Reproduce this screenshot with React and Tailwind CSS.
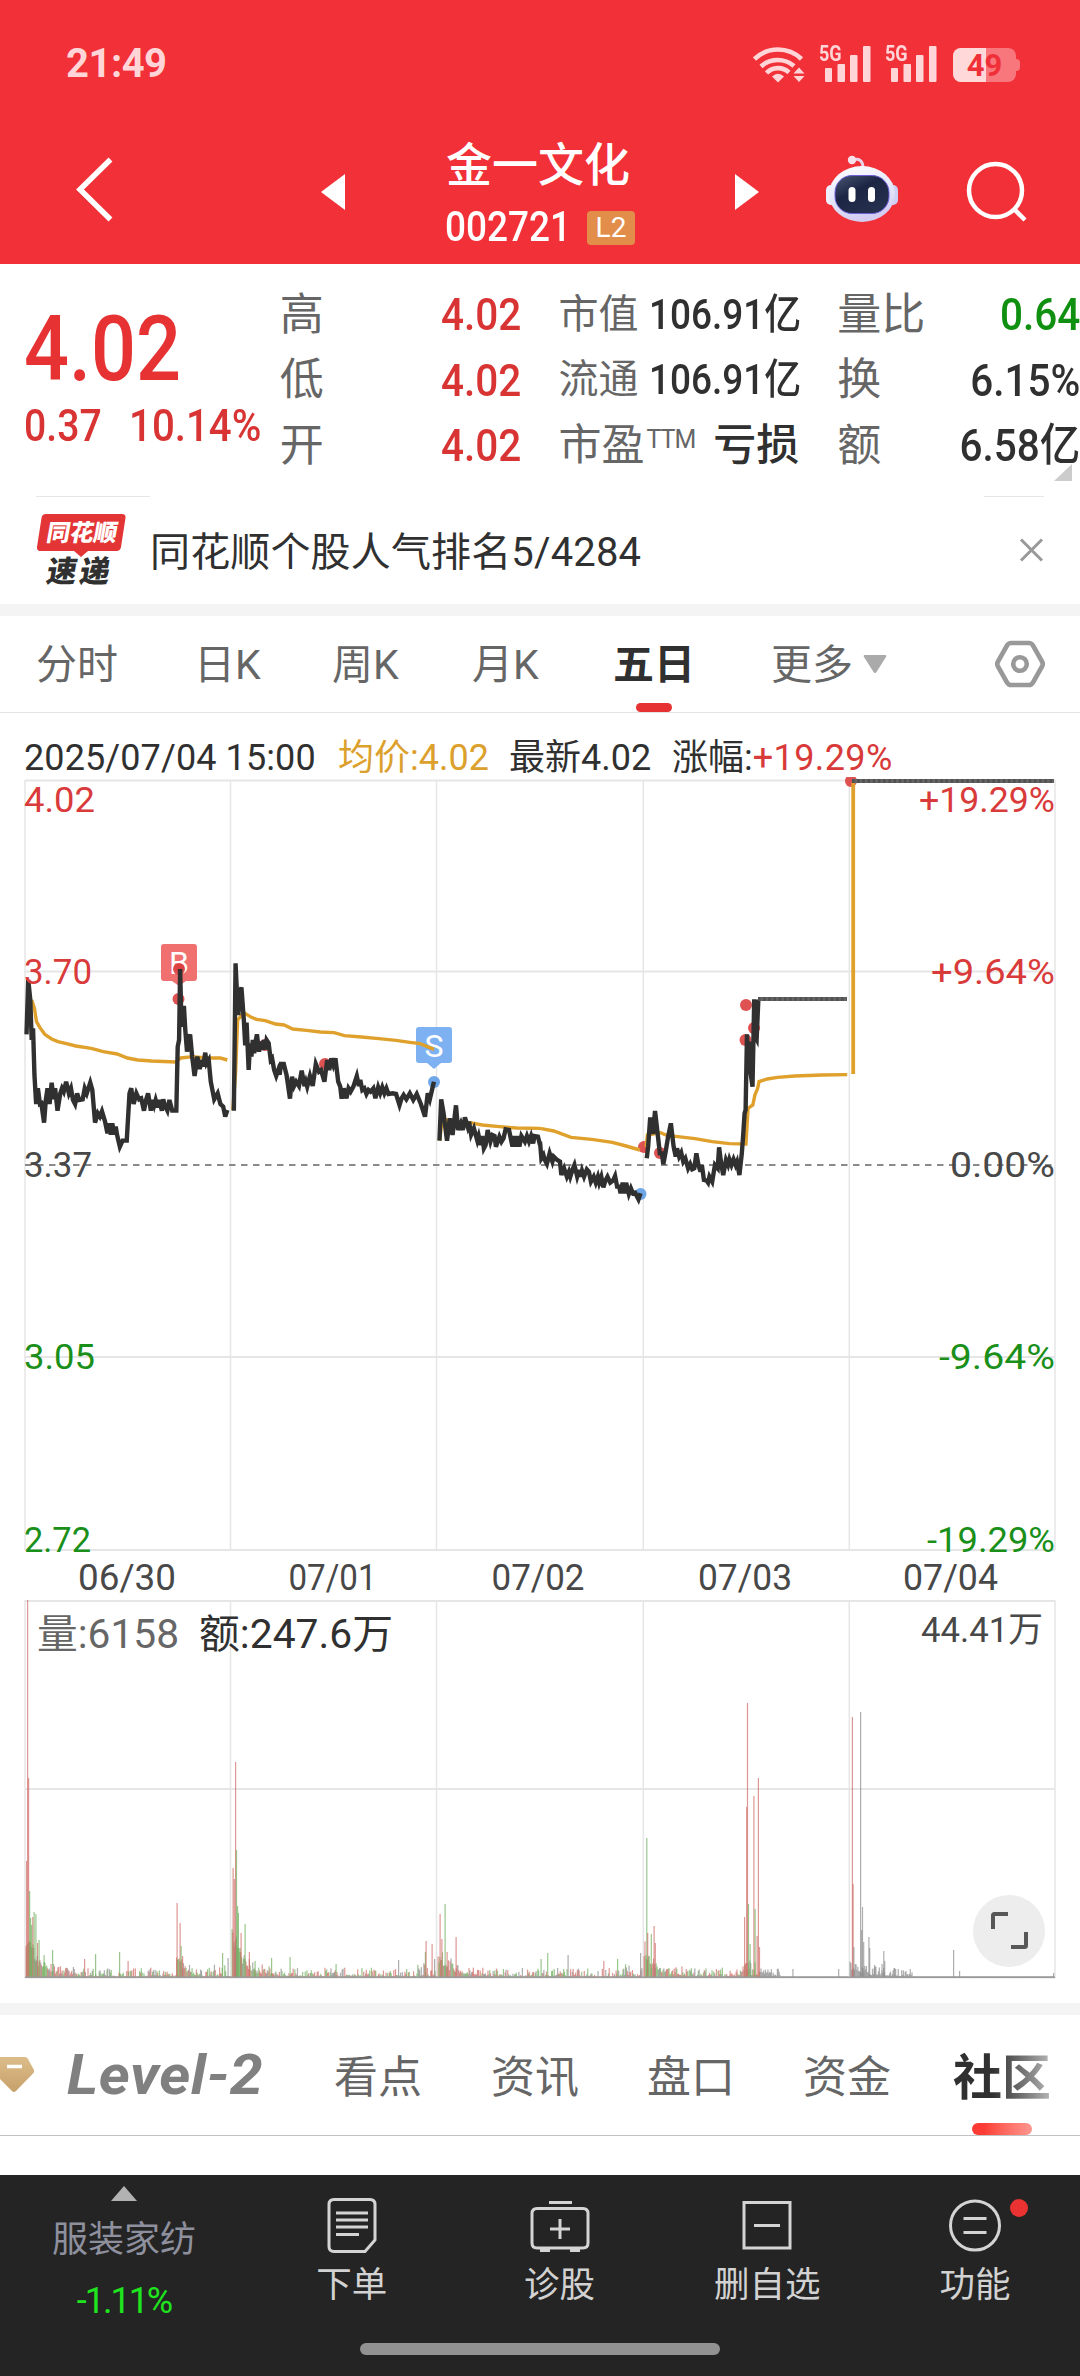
import React from "react";
import clsx from "clsx";

const UP = "#d93a3a";
const DOWN = "#1a8f1a";
const AVG = "#dfa02c";
const INK = "#303030";

// 분할 좌표계: 왼쪽 절반 / 오른쪽 절반
const LEFT_HALF = "translate(0 900) scale(0.3444 0.33333)";
const RIGHT_HALF = "translate(540 760) scale(0.3444 0.33333)";

const leftPrices = [
  "77,403 82,240 88,300 92,420 96,385 100,525 105,612 110,565 116,612 120,610 128,668 133,600 138,565 144,612 150,548 156,598 160,565 167,632 175,580 180,565 185,575 192,545 200,580 206,565 212,600 218,612 224,580 230,600 240,598 246,565 252,580 262,548 268,570 276,668 284,640 290,650 296,634 305,665 312,700 318,670 322,704 326,670 332,704 336,680 340,705 348,740 356,722 368,722 376,580 381,565 388,612 396,580 404,598 410,595 418,632 424,600 430,580 438,632 444,600 448,615 452,600 458,622 462,600 470,632 474,598 478,615 486,632 492,600 500,632 512,632 516,440 520,420 523,207 527,380 534,318 538,390 543,455 548,420 552,403 558,470 565,528 573,470 580,507 586,480 590,500 596,458 600,490 606,480 612,545 622,598 632,580 640,612 648,620 654,650 660,630",
  "679,632 684,190 688,280 692,345 697,280 701,262 708,360 712,436 716,368 722,510 726,430 730,470 734,420 738,460 742,425 746,403 752,455 758,425 762,450 766,420 770,448 774,420 780,430 786,480 790,475 796,510 802,528 808,510 812,524 816,492 824,492 832,525 842,596 848,530 854,558 860,545 868,558 876,512 884,558 888,545 892,560 900,528 908,558 917,492 926,515 932,510 942,545 950,480 956,510 962,475 968,495 974,475 982,545 988,560 992,596 998,565 1006,595 1012,565 1018,575 1026,560 1036,528 1042,558 1046,540 1052,570 1058,565 1064,582 1070,570 1076,575 1084,565 1090,595 1098,562 1104,580 1110,562 1116,580 1122,565 1128,582 1140,580 1150,582 1160,615 1166,595 1172,585 1180,598 1190,580 1200,600 1210,582 1222,612 1234,650 1242,580 1248,598 1260,545",
  "1276,722 1281,598 1288,640 1298,722 1306,655 1314,705 1324,616 1330,690 1338,670 1344,690 1350,652 1358,680 1362,665 1368,704 1376,685 1386,722 1390,708 1396,735 1400,708 1405,745 1410,735 1416,690 1424,725 1430,705 1436,708 1440,740 1450,710 1456,725 1462,715 1468,688 1478,690 1488,740 1494,708 1498,740 1502,708 1508,740 1514,708 1524,725 1530,708 1536,725 1542,708 1548,730 1552,708 1562,710 1568,735",
];

const rightPrices = [
  "0,1145 4,1195 10,1185 14,1200 20,1212 28,1180 36,1205 40,1190 50,1200 58,1205 62,1245 70,1225 78,1250 84,1235 88,1250 94,1230 100,1215 108,1250 114,1230 118,1250 122,1232 128,1250 136,1228 142,1235 148,1265 156,1250 162,1268 168,1250 172,1268 178,1250 184,1282 190,1262 196,1250 204,1268 212,1262 218,1248 224,1280 230,1280 234,1300 240,1268 246,1300 250,1268 258,1302 264,1285 270,1300 276,1298 286,1318 292,1300",
  "310,1195 314,1160 320,1072 328,1122 334,1053 342,1125 348,1180 354,1180 358,1213 364,1180 372,1130 380,1090 388,1160 394,1190 398,1165 404,1190 410,1178 416,1205 422,1195 430,1225 436,1212 442,1228 448,1225 454,1180 460,1215 466,1235 470,1215 476,1260 484,1262 488,1268 492,1250 500,1265 508,1215 516,1225 520,1162 526,1210 532,1245 540,1200 546,1215 550,1198 556,1215 562,1198 568,1215 572,1205 579,1245 586,1180 590,1125 594,1060 597,1050 601,823 604,920 608,845 611,935 617,980 622,718 625,830 629,838 634,718",
];

const leftAverages = [
  "92,300 100,325 106,365 116,383 130,403 150,417 168,425 190,430 220,438 265,445 300,455 340,462 370,474 400,480 440,483 510,486 525,474 560,470 600,474 640,474 660,480",
  "676,630 684,520 690,360 708,338 730,352 745,358 770,362 800,372 825,375 850,387 890,391 930,396 970,398 1000,407 1050,411 1100,416 1150,421 1190,427 1220,431 1260,448",
  "1277,722 1284,655 1310,665 1366,668 1400,675 1450,680 1500,684 1568,685",
];

const rightAverages = [
  "0,1105 40,1113 90,1132 150,1138 210,1147 250,1158 290,1170",
  "308,1160 312,1125 350,1118 370,1127 400,1130 450,1136 500,1145 550,1151 598,1152 604,1045 618,1035 624,1005 632,985 636,965 660,957 690,952 740,948 820,945 892,944",
];

const tradeDots = [
  [179, 969, UP],
  [178.5, 999, UP],
  [265, 1045, UP],
  [325, 1064, UP],
  [434, 1082, "#5b9be6"],
  [644, 1147, UP],
  [660, 1153, UP],
  [640.5, 1194, "#5b9be6"],
  [746, 1005, UP],
  [754, 1028, UP],
  [745.5, 1040, UP],
  [851, 781, UP],
];

// [x, 높이, 색상]
const volumePeaks = [
  [26.5, 117, "r"], [27.5, 378, "r"], [28.5, 200, "r"], [29.5, 87, "g"], [30.5, 60, "g"], [31.5, 53, "g"],
  [32.7, 61, "r"], [34, 66, "g"], [35.8, 64, "g"], [37.5, 35, "r"], [39, 38, "g"], [44, 23, "g"],
  [52.5, 28, "g"], [84.5, 19, "r"], [95.5, 24, "g"], [119.5, 26, "g"], [128, 17, "r"],
  [177, 75, "r"], [180, 55, "r"], [181, 32, "g"], [182.5, 22, "r"], [222.5, 25, "g"], [228, 20, "k"],
  [233, 110, "r"], [234.2, 99, "r"], [235.5, 216, "r"], [236.4, 128, "g"], [237.5, 72, "g"], [238.3, 65, "g"],
  [240, 30, "g"], [241, 45, "r"], [245, 54, "g"], [249.3, 26, "r"], [255, 17, "g"], [271.5, 20, "g"],
  [290, 21, "g"], [336, 14, "g"], [398.5, 18, "k"], [425.3, 26, "g"], [426, 37, "r"], [432, 34, "r"], [434.5, 19, "k"],
  [440, 64, "r"], [441.8, 39, "r"], [445, 74, "g"], [447, 26, "r"], [456, 41, "r"],
  [541, 19, "g"], [547.6, 25, "g"], [568, 23, "k"], [603.7, 17, "r"], [617.5, 19, "g"], [640.5, 25, "k"],
  [646.7, 140, "g"], [647.6, 45, "r"], [651.2, 44, "g"], [654, 52, "r"], [655.2, 35, "r"],
  [744.5, 61, "r"], [746.6, 171, "r"], [747.4, 275, "r"], [748.4, 74, "g"], [750, 34, "g"], [753.8, 182, "r"],
  [755, 69, "g"], [757, 42, "r"], [758.3, 200, "r"], [759.4, 31, "r"], [792.8, 9, "k"], [838.6, 9, "k"],
  [852.3, 261, "r"], [853, 94, "r"], [853.8, 31, "k"], [860.5, 266, "k"], [861.6, 48, "k"], [862.4, 71, "k"],
  [863.6, 36, "k"], [868.8, 41, "k"], [869.6, 30, "k"], [874.5, 13, "k"], [882, 14, "k"], [883.7, 27, "k"],
  [884.6, 17, "k"], [894.5, 10, "k"], [953.5, 28, "k"], [959.5, 7, "k"], [1053.5, 5, "k"],
];

const VOLUME_COLORS = { r: "#cf6a64", g: "#6fae5c", k: "#8a8a8a" };

function buildVolumeNoise() {
  const bars = [];
  let seed = 7;
  const rand = () => {
    seed = (seed * 16807) % 2147483647;
    return seed / 2147483647;
  };
  for (let day = 0; day < 5; day++) {
    const open = 26 + day * 206;
    const surge = [46, 46, 26, 30, 12][day];
    for (let m = 0; m < 238; m++) {
      const x = open + m * 0.86;
      const flat = (day === 3 && x > 780) || (day === 4 && x > 912);
      let h = 1.5 + surge * Math.exp(-m / 15) * (0.5 + rand() * 0.6);
      if (!flat) h += rand() ** 2.4 * (m > 215 ? 14 : 9);
      if (day === 0 && x > 176 && x < 200) h += 20 * Math.exp(-(x - 176) / 7);
      if (day === 3 && x > 740 && x < 775) h += 22 * Math.exp(-Math.abs(x - 750) / 9) * rand();
      const roll = rand();
      let tone = roll < 0.42 ? "r" : roll < 0.78 ? "g" : "k";
      if (day === 4 || (day === 3 && x > 760)) tone = "k";
      bars.push([x, h, tone]);
    }
  }
  return bars;
}

const volumeBars = [...buildVolumeNoise(), ...volumePeaks];

function Polylines({ list, color, width }) {
  return list.map((points) => (
    <polyline
      key={points.slice(0, 12)}
      points={points}
      fill="none"
      stroke={color}
      strokeWidth={width}
      vectorEffect="non-scaling-stroke"
    />
  ));
}

function Label({ x, y, children, color = "#484848", anchor = "start", size = 35, len }) {
  return (
    <text
      x={x}
      y={y}
      fill={color}
      fontSize={size}
      textAnchor={anchor}
      textLength={len}
      lengthAdjust="spacingAndGlyphs"
    >
      {children}
    </text>
  );
}

function PriceChart() {
  return (
    <svg width="1080" height="823" viewBox="0 777 1080 823" className="block">
      <g fill="none" stroke="#e6e6e6" strokeWidth="2">
        <path d="M25 780.5H1055M25 971.5H1055M25 1357H1055M25 1550H1055" />
        <path d="M25 780V1550M230.5 780V1550M436.5 780V1550M643.3 780V1550M849.3 780V1550M1055 780V1550" strokeWidth="1.5" />
      </g>
      <path d="M25 1165H1055" stroke="#8a8a8a" strokeWidth="2" strokeDasharray="6.5 5.5" />

      {/* 매수 / 매도 마커 */}
      <path d="M164 944h30q3 0 3 3v31q0 3-3 3h-8l-7 5-7-5h-8q-3 0-3-3v-31q0-3 3-3z" fill="#f07070" />
      <path d="M419 1027h30q3 0 3 3v30q0 3-3 3h-8l-7 6-7-6h-8q-3 0-3-3v-30q0-3 3-3z" fill="#7db1f2" />
      <Label x={179} y={974} color="#fff" anchor="middle" size={32}>B</Label>
      <Label x={434} y={1057} color="#fff" anchor="middle" size={32}>S</Label>
      {tradeDots.map(([x, y, fill]) => (
        <circle key={`${x}-${y}`} cx={x} cy={y} r="6" fill={fill} fillOpacity="0.88" />
      ))}

      <g transform={LEFT_HALF}>
        <Polylines list={leftAverages} color={AVG} width={3.4} />
        <Polylines list={leftPrices} color={INK} width={4.4} />
      </g>
      <g transform={RIGHT_HALF}>
        <Polylines list={rightAverages} color={AVG} width={3.4} />
        <Polylines list={rightPrices} color={INK} width={4.4} />
      </g>
      <path d="M853.2 1074V783" stroke={AVG} strokeWidth="3.8" />
      <path d="M758 999H847M852 781H1054" stroke="#646464" strokeWidth="4" />
      <path d="M758 999H847M852 781H1054" stroke="#505050" strokeWidth="4" strokeDasharray="2.4 2.8" />

      <Label x={24} y={811.5} color={UP} len={71}>4.02</Label>
      <Label x={24} y={983.5} color={UP} len={68}>3.70</Label>
      <Label x={24} y={1176.5} len={68}>3.37</Label>
      <Label x={24} y={1369} color={DOWN} len={71}>3.05</Label>
      <Label x={24} y={1552} color={DOWN} len={67}>2.72</Label>
      <Label x={1055} y={811.5} color={UP} anchor="end" len={136}>+19.29%</Label>
      <Label x={1055} y={983.5} color={UP} anchor="end" len={124}>+9.64%</Label>
      <Label x={1055} y={1176.5} anchor="end" len={105}>0.00%</Label>
      <Label x={1055} y={1369} color={DOWN} anchor="end" len={116}>-9.64%</Label>
      <Label x={1055} y={1552} color={DOWN} anchor="end" len={128}>-19.29%</Label>

      <Label x={127} y={1589.5} anchor="middle" size={36} len={98}>06/30</Label>
      <Label x={332.5} y={1589.5} anchor="middle" size={36} len={88}>07/01</Label>
      <Label x={538} y={1589.5} anchor="middle" size={36} len={93}>07/02</Label>
      <Label x={745} y={1589.5} anchor="middle" size={36} len={94}>07/03</Label>
      <Label x={950.5} y={1589.5} anchor="middle" size={36} len={95}>07/04</Label>
    </svg>
  );
}

function VolumeChart() {
  return (
    <svg width="1080" height="380" viewBox="0 1600 1080 380" className="block">
      <g fill="none" stroke="#e6e6e6" strokeWidth="2">
        <path d="M25 1601H1055M25 1789H1055M25 1977.5H1055" />
        <path d="M25 1600V1978M230.5 1600V1978M436.5 1600V1978M643.3 1600V1978M849.3 1600V1978M1055 1600V1978" strokeWidth="1.5" />
      </g>
      {volumeBars.map(([x, h, tone], i) => (
        <rect key={i} x={x - 0.5} y={1978 - h} width="1.2" height={h} fill={VOLUME_COLORS[tone]} fillOpacity="0.7" />
      ))}
      <path d="M25 1977.3H1055" stroke="#9a9a9a" strokeWidth="1.4" />
      <Label x={37} y={1648} color="#666" size={40} len={142}>量:6158</Label>
      <Label x={199} y={1648} color={INK} size={40} len={194}>额:247.6万</Label>
      <Label x={1043} y={1641.5} anchor="end" len={122}>44.41万</Label>
    </svg>
  );
}

function SignalBars() {
  return (
    <div className="relative h-9 w-[52px]">
      <span className="absolute -top-1 left-0 origin-left scale-x-[.82] text-[22px] leading-6 font-bold">5G</span>
      <svg width="52" height="36" viewBox="0 0 52 36" fill="currentColor">
        <rect x="6" y="22" width="7" height="14" rx="1" />
        <rect x="18.5" y="18" width="7.5" height="18" rx="1" />
        <rect x="31" y="9" width="7.5" height="27" rx="1" />
        <rect x="44" y="0" width="7.5" height="36" rx="1" />
      </svg>
    </div>
  );
}

function StatusBar() {
  return (
    <div className="flex h-32 justify-between pr-[60px] pl-[66px] text-[#ffd5d7]">
      <span className="mt-10 text-[40px] leading-12 font-bold tracking-[-0.5px]">21:49</span>
      <div className="mt-[46px] flex items-start">
        <svg width="52" height="37" viewBox="0 0 52 37" fill="none" stroke="currentColor" strokeWidth="4.6">
          <path d="M1.5 13A34 34 0 0 1 48.5 13M8 20.5A25 25 0 0 1 41 20M13.5 27A16 16 0 0 1 36 26.5" />
          <path d="M25 36.5l-6-6q6-5.5 12 0z" fill="currentColor" stroke="none" />
          <path d="M46 21.5l5.5 6h-11zM46 36l5.5-6h-11z" fill="currentColor" stroke="none" />
        </svg>
        <div className="ml-3.5"><SignalBars /></div>
        <div className="ml-3.5"><SignalBars /></div>
        <div className="relative mt-0.5 ml-4 h-[34px] w-[67px]">
          <div className="absolute top-[11px] right-0 h-3 w-1.5 rounded-r bg-[#f8777c]" />
          <div className="flex h-[34px] w-[63px] overflow-hidden rounded-lg bg-[#f8777c]">
            <div className="w-[33px] bg-[#ffd9da]" />
          </div>
          <span className="absolute inset-0 pr-1 text-center text-[31px] leading-[36px] font-bold text-[#f03038]">49</span>
        </div>
      </div>
    </div>
  );
}

function Robot() {
  return (
    <svg width="74" height="70" viewBox="0 0 74 70">
      <defs>
        <linearGradient id="shell" x1="0" y1="0" x2="0.3" y2="1">
          <stop offset="0" stopColor="#fff" />
          <stop offset="0.6" stopColor="#e4e6fa" />
          <stop offset="1" stopColor="#d3cdf2" />
        </linearGradient>
        <linearGradient id="visor" x1="0" y1="0" x2="0.7" y2="1">
          <stop offset="0" stopColor="#4a5675" />
          <stop offset="0.45" stopColor="#1c2644" />
          <stop offset="1" stopColor="#26304f" />
        </linearGradient>
      </defs>
      <path d="M27 6q11-3 11 8" fill="none" stroke="#ead3ea" strokeWidth="3" />
      <circle cx="27" cy="6" r="4.2" fill="#f7e0ea" />
      <rect x="1" y="31" width="10" height="20" rx="5" fill="#eef0fd" />
      <rect x="63" y="31" width="10" height="20" rx="5" fill="#cdd0f5" />
      <ellipse cx="37" cy="40" rx="33" ry="28" fill="url(#shell)" />
      <rect x="10" y="21.5" width="54" height="38" rx="17" fill="url(#visor)" stroke="#6e5fd8" strokeWidth="1" />
      <rect x="23.5" y="33" width="7" height="15" rx="3.5" fill="#fff" />
      <rect x="43" y="33" width="7" height="15" rx="3.5" fill="#fff" />
    </svg>
  );
}

function TitleBar() {
  return (
    <div className="flex h-[136px] text-white">
      <svg className="mt-[27px] ml-[74px]" width="42" height="68" viewBox="0 0 42 68" fill="none" stroke="currentColor" strokeWidth="5.5">
        <path d="M36.5 4.5L6 34.5 36.5 64.5" />
      </svg>
      <svg className="mt-[46px] ml-[205px]" width="24" height="36" viewBox="0 0 24 36" fill="currentColor">
        <path d="M24 0v36L0 18z" />
      </svg>
      <div className="mt-2 flex w-[390px] flex-col items-center">
        <div className="pr-1 text-[46px] leading-[58px] font-medium">金一文化</div>
        <div className="flex items-center gap-3.5 pt-2.5">
          <span className="w-[128px] text-[42px] leading-[46px] font-medium whitespace-nowrap"><span className="inline-block origin-left scale-x-[.88]">002721</span></span>
          <span className="mt-0.5 flex h-[34px] w-12 items-center justify-center rounded bg-[#e38d4b] text-[28px]">L2</span>
        </div>
      </div>
      <svg className="mt-[46px]" width="24" height="36" viewBox="0 0 24 36" fill="currentColor">
        <path d="M0 0v36L24 18z" />
      </svg>
      <div className="mt-[26px] ml-[66px]"><Robot /></div>
      <svg className="mt-[31px] ml-[66px]" width="64" height="66" viewBox="0 0 64 66" fill="none" stroke="currentColor" strokeWidth="4.5">
        <circle cx="30.5" cy="31.5" r="26.5" />
        <path d="M49 50l11 11" />
      </svg>
    </div>
  );
}

function QuoteRow({ label, value, tone }) {
  return (
    <div className="flex h-[65.5px] items-center justify-between whitespace-nowrap">
      <span className="text-[44px] leading-none text-[#666]">{label}</span>
      <span className={clsx("origin-right scale-x-[.9] text-[45px] leading-none font-medium", tone)}>{value}</span>
    </div>
  );
}

function QuotePanel() {
  return (
    <section className="relative h-[232px] pt-[18px]">
      <div className="flex">
        <div className="w-[280px] pl-6 font-medium text-[#e63232]">
          <div className="mt-[15px] origin-left scale-x-[.88] text-[90px] leading-[106px]">4.02</div>
          <div className="-mt-0.5 flex text-[45px] leading-[50px] text-[#d83434]">
            <span className="w-[105px]"><span className="inline-block origin-left scale-x-[.87]">0.37</span></span>
            <span className="inline-block origin-left scale-x-[.895]">10.14%</span>
          </div>
        </div>
        <div className="w-[242px]">
          <QuoteRow label="高" value="4.02" tone="text-[#d83434]" />
          <QuoteRow label="低" value="4.02" tone="text-[#d83434]" />
          <QuoteRow label="开" value="4.02" tone="text-[#d83434]" />
        </div>
        <div className="ml-[37px] w-[241px]">
          {["市值", "流通"].map((label) => (
            <div key={label} className="flex h-[65.5px] items-center justify-between whitespace-nowrap">
              <span className="text-[40px] leading-none text-[#666]">{label}</span>
              <span className="w-[150px] text-[42px] leading-none font-medium text-[#303030]">
                <span className="inline-block origin-left scale-x-[.88]">106.91亿</span>
              </span>
            </div>
          ))}
          <div className="flex h-[65.5px] items-center justify-between whitespace-nowrap">
            <span className="flex text-[43px] leading-none text-[#666]">
              市盈<span className="ml-0.5 text-[25px] leading-[32px] tracking-[-1px]">TTM</span>
            </span>
            <span className="text-[43px] leading-none font-medium text-[#303030]">亏损</span>
          </div>
        </div>
        <div className="ml-[38px] w-[243px]">
          <QuoteRow label="量比" value="0.64" tone="text-[#109010]" />
          <QuoteRow label="换" value="6.15%" tone="text-[#303030]" />
          <QuoteRow label="额" value="6.58亿" tone="text-[#303030]" />
        </div>
      </div>
      <svg className="absolute right-2 bottom-[15px]" width="18" height="17" viewBox="0 0 18 17">
        <path d="M18 0v17H0z" fill="#ccc" />
      </svg>
    </section>
  );
}

function NewsBar() {
  return (
    <section className="h-[108px]">
      <div className="flex justify-between pr-9 pl-9">
        <div className="h-px w-[114px] bg-[#e6e6e6]" />
        <div className="h-px w-[60px] bg-[#e6e6e6]" />
      </div>
      <div className="flex items-start pl-[37px]">
        <div className="relative mt-[17px] h-[74px] w-[89px]">
          <svg className="absolute inset-0" width="89" height="44" viewBox="0 0 89 44">
            <path d="M9 0h76q4 0 3.500 4L84 33q-.7 4-4.500 4H51l-7 6-7-6H4q-4.500 0-4-4L4.500 4Q5 0 9 0z" fill="#e33535" />
          </svg>
          <div className="absolute top-[6px] left-[10px] -skew-x-10 text-[23.5px] leading-[26px] font-black whitespace-nowrap text-white">同花顺</div>
          <div className="absolute top-[42px] left-[10px] -skew-x-10 text-[30px] leading-[32px] font-black tracking-[3px] whitespace-nowrap text-[#303030]">速递</div>
        </div>
        <div className="mt-[32px] ml-[24px] text-[40px] leading-[48px] tracking-[0.15px] text-[#303030]">同花顺个股人气排名5/4284</div>
        <svg className="mt-[41px] ml-auto mr-9" width="25" height="24" viewBox="0 0 25 24" fill="none" stroke="#999" strokeWidth="3">
          <path d="M2 1.500L23 22.500M23 1.500L2 22.500" />
        </svg>
      </div>
    </section>
  );
}

const periods = [
  { name: "分时", cls: "w-[80px]" },
  { name: "日K", cls: "ml-[78px] w-[66px]" },
  { name: "周K", cls: "ml-[72px] w-[66px]" },
  { name: "月K", cls: "ml-[74px] w-[66px]" },
];

function PeriodTabs() {
  return (
    <nav className="flex h-[97px] items-center border-b border-[#e4e4e4] pl-[36px] text-[41px] whitespace-nowrap text-[#666]">
      {periods.map((p) => (
        <span key={p.name} className={clsx("pt-1", p.cls)}>{p.name}</span>
      ))}
      <span className="relative ml-[75px] flex h-full w-20 items-center pt-1 font-bold text-[#303030]">
        五日
        <i className="absolute bottom-0 left-[23px] h-[9px] w-9 rounded-full bg-[#e63232]" />
      </span>
      <span className="ml-[78px] pt-1">更多</span>
      <svg className="ml-2.5" width="24" height="18" viewBox="0 0 24 18">
        <path d="M2 0h20q2 0 1 2l-9.500 15q-1.500 2-3 0L1 2Q0 0 2 0z" fill="#aaa" />
      </svg>
      <svg className="ml-[108px]" width="50" height="48" viewBox="0 0 50 48" fill="none" stroke="#999" strokeWidth="4.600">
        <path d="M16 3h18q2.500 0 4 2.500l9 16q1.500 2.500 0 5l-9 16Q36.500 45 34 45H16q-2.500 0-4-2.500l-9-16q-1.500-2.500 0-5l9-16Q13.500 3 16 3z" />
        <circle cx="25" cy="24" r="6.800" />
      </svg>
    </nav>
  );
}

function CrosshairInfo() {
  return (
    <div className="flex h-[64px] pt-[21px] pl-6 text-[36px] leading-[48px] whitespace-nowrap text-[#303030]">
      <span className="w-[314px] tracking-[0.1px]">2025/07/04 15:00</span>
      <span className="w-[171px] text-[#dca02c]">均价:4.02</span>
      <span className="w-[163px]">最新4.02</span>
      <span>涨幅:<span className="tracking-[0.4px] text-[#d83a3a]">+19.29%</span></span>
    </div>
  );
}

function SectionTabs() {
  return (
    <nav className="relative flex h-[121px] items-center border-b border-[#c2c2c2] text-[44px] whitespace-nowrap text-[#666]">
      <svg width="34" height="36" viewBox="0 0 34 36">
        <defs>
          <linearGradient id="gem" x1="0" y1="0" x2="0" y2="1">
            <stop offset="0" stopColor="#dcbd8a" />
            <stop offset="1" stopColor="#c7a06a" />
          </linearGradient>
        </defs>
        <path d="M0 0h25q2 0 3 2l6 11q.5 2-1 3.500L16 34q-2 2-4 0L0 22z" fill="url(#gem)" />
        <path d="M7 9.500h15" stroke="#fff" strokeWidth="3.500" />
      </svg>
      <span className="ml-[33px] w-[267px] pt-2 text-[#808080]"><span className="inline-block origin-left scale-x-[1.06] text-[56px] leading-none font-bold italic tracking-[0.5px]">Level-2</span></span>
      <span className="w-[157px] pt-1.5">看点</span>
      <span className="w-[156px] pt-1.5">资讯</span>
      <span className="w-[156px] pt-1.5">盘口</span>
      <span className="w-[150px] pt-1.5">资金</span>
      <span className="bg-linear-to-r from-[#303030] from-40% to-[#b8b8b8] bg-clip-text pt-2 text-[49px] font-bold text-transparent">社区</span>
      <i className="absolute bottom-0 left-[972px] h-3 w-[60px] rounded-full bg-linear-to-r from-[#fb3b34] from-20% to-[#fd9690]" />
    </nav>
  );
}

function NavItem({ label, children, badge }) {
  return (
    <div className="relative flex w-[207.7px] flex-col items-center">
      <svg className="mt-[20px]" width="62" height="60" viewBox="0 0 62 60" fill="none" stroke="#d4d4d4" strokeWidth="3">
        {children}
      </svg>
      {badge && <i className="absolute top-[24px] left-[139px] size-[18px] rounded-full bg-[#ea3232]" />}
      <span className="mt-1.5 text-[35.5px] leading-[48px] text-[#d2d2d2]">{label}</span>
    </div>
  );
}

function BottomNav() {
  return (
    <footer className="h-[201px] bg-[#242424]">
      <div className="flex h-[168px]">
        <div className="flex w-[248px] flex-col items-center">
          <svg className="mt-[11px]" width="26" height="15" viewBox="0 0 26 15">
            <path d="M13 0l13 15H0z" fill="#b2b2b2" />
          </svg>
          <span className="mt-[15px] text-[36px] leading-[48px] text-[#8e909e]">服装家纺</span>
          <span className="mt-[13px] text-[36px] leading-[48px] tracking-[-2px] text-[#1fe51f]">-1.11%</span>
        </div>
        <NavItem label="下单">
          <path d="M13 4.500h36q5 0 5 5V45L44 56.500H13q-5 0-5-5v-42q0-5 5-5z" />
          <path d="M15 18h32M15 25h32M15 32h32M15 39.500h23" />
        </NavItem>
        <NavItem label="诊股">
          <path d="M8 13.500h46q5 0 5 5V48q0 5-5 5H8q-5 0-5-5V18.500q0-5 5-5zM20 7.500h23M31 24v20M21 34h20M11 55.500h10M41 55.500h10" />
        </NavItem>
        <NavItem label="删自选">
          <path d="M8 7.500h46v45.500H8zM18 30.500h26" />
        </NavItem>
        <NavItem label="功能" badge>
          <circle cx="31" cy="30.500" r="24.500" />
          <path d="M19.500 23.500h23M19.500 37.500h23" />
        </NavItem>
      </div>
      <div className="mx-auto h-3 w-[360px] rounded-full bg-[#929292]" />
    </footer>
  );
}

export default function App() {
  return (
    <div className="flex h-[2376px] w-[1080px] flex-col overflow-hidden bg-white font-[Roboto,'Noto_Sans_CJK_SC',sans-serif]">
      <header className="h-[264px] bg-[#f23038]">
        <StatusBar />
        <TitleBar />
      </header>
      <QuotePanel />
      <NewsBar />
      <div className="h-3 bg-[#f4f4f4]" />
      <PeriodTabs />
      <CrosshairInfo />
      <PriceChart />
      <div className="relative h-[403px]">
        <VolumeChart />
        <button className="absolute top-[295px] left-[973px] size-[72px] rounded-full bg-[#ededed]">
          <svg width="72" height="72" viewBox="0 0 72 72" fill="none" stroke="#585858" strokeWidth="4">
            <path d="M20 34V20.500q0-1.500 1.500-1.500H35M53 37v13.500q0 1.500-1.500 1.500H38" />
          </svg>
        </button>
      </div>
      <div className="h-3 bg-[#f4f4f4]" />
      <SectionTabs />
      <div className="h-[39px]" />
      <BottomNav />
    </div>
  );
}
